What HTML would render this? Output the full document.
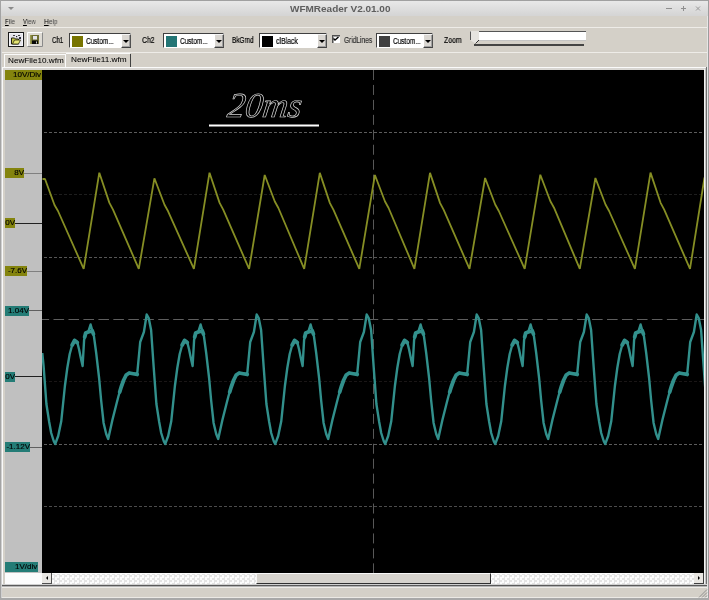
<!DOCTYPE html>
<html><head><meta charset="utf-8">
<style>
*{margin:0;padding:0;box-sizing:border-box}
html,body{width:709px;height:600px;overflow:hidden;background:#d4d0c8;font-family:"Liberation Sans",sans-serif;color:#000}
.a{position:absolute}
.t{position:absolute;white-space:nowrap;font-size:7px;line-height:8px;transform-origin:0 0;will-change:transform}
.combo{position:absolute;top:33px;height:15px;background:#fff;border-top:1px solid #808080;border-left:1px solid #808080;border-right:1px solid #fff;border-bottom:1px solid #fff;box-shadow:inset 1px 1px 0 #404040, inset -1px -1px 0 #d4d0c8;overflow:hidden}
.sw{position:absolute;top:2px;left:2px;width:12px;height:11px}
.dd{position:absolute;top:1px;right:1px;width:10px;height:13px;background:#d4d0c8;border-top:1px solid #fff;border-left:1px solid #fff;border-right:1px solid #404040;border-bottom:1px solid #404040}
.dd:after{content:"";position:absolute;left:2px;top:5px;border-left:3px solid transparent;border-right:3px solid transparent;border-top:3px solid #000}
.lab{position:absolute;left:5px;height:10px;font-size:8px;line-height:10px;text-align:right;color:#000;overflow:hidden;white-space:nowrap;will-change:transform;-webkit-text-stroke:0.15px #000}
.o{background:#84840e}
.c{background:#247c76}
.tt{position:absolute;white-space:nowrap;font-size:8.5px;line-height:8px;transform-origin:0 0;color:#000;will-change:transform;-webkit-text-stroke:0.2px currentColor}
.cb{position:absolute;top:33px;height:15px;background:#fff;border-top:1px solid #404040;border-left:1px solid #404040;border-right:1px solid #fff;border-bottom:1px solid #fff}
.btn{position:absolute;top:34px;width:10px;height:14px;background:#dad7d2;border-top:1px solid #f4f4f4;border-left:1px solid #fff;border-right:1px solid #505050;border-bottom:1px solid #404040;box-shadow:inset -1px -1px 0 #a0a0a0}
.arr{position:absolute;top:39.5px;width:0;height:0;border-left:3px solid transparent;border-right:3px solid transparent;border-top:3px solid #000}
.chk{position:absolute;left:332px;top:35px;width:8px;height:8px;background:#fff;border-top:1px solid #505050;border-left:1px solid #505050;box-shadow:inset 1px 1px 0 #a0a0a0}
</style></head><body>
<!-- window frame -->
<div class="a" style="left:0;top:0;width:709px;height:1px;background:#a0a0a0"></div>
<div class="a" style="left:0;top:0;width:1px;height:600px;background:#a4a4a4"></div>
<div class="a" style="left:1px;top:15px;width:1px;height:583px;background:#d0d0d0"></div>
<div class="a" style="left:708px;top:0;width:1px;height:600px;background:#9c9c9c"></div>
<div class="a" style="left:707px;top:15px;width:1px;height:583px;background:#e6e6e6"></div>
<div class="a" style="left:2px;top:597px;width:705px;height:1px;background:#ebe9e5"></div>
<div class="a" style="left:0;top:598px;width:709px;height:2px;background:#a8a8a8"></div>
<!-- title bar -->
<div class="a" style="left:1px;top:1px;width:707px;height:15px;background:linear-gradient(#e8e8e8,#d4d4d4)"></div>
<div class="t" style="left:290px;top:5px;font-size:8.5px;line-height:8px;font-weight:bold;color:#5e5e5e;transform:scaleX(1.175)">WFMReader V2.01.00</div>
<div class="a" style="left:8px;top:7px;width:0;height:0;border-left:3px solid transparent;border-right:3px solid transparent;border-top:3px solid #8a8a8a"></div>
<svg class="a" style="left:660px;top:2px" width="46" height="12" viewBox="0 0 46 12">
<path d="M6,6.5 H12" stroke="#8e8e8e" stroke-width="1"/>
<path d="M21,6.5 H26 M23.5,4 V9" stroke="#8e8e8e" stroke-width="1"/>
<path d="M36,4.5 L40,8.5 M40,4.5 L36,8.5" stroke="#9a9a9a" stroke-width="1"/>
</svg>
<!-- menu -->
<div class="t" style="left:5px;top:18px;font-size:7.5px;color:#444;transform:scaleX(.82)"><u style="color:#000">F</u>ile</div>
<div class="t" style="left:23px;top:18px;font-size:7.5px;color:#444;transform:scaleX(.78)"><u style="color:#000">V</u>iew</div>
<div class="t" style="left:43.5px;top:18px;font-size:7.5px;color:#444;transform:scaleX(.88)"><u style="color:#000">H</u>elp</div>
<div class="a" style="left:2px;top:27px;width:705px;height:1px;background:#eeece8"></div>
<!-- toolbar -->
<svg class="a" style="left:8px;top:32px" width="16" height="15" viewBox="0 0 16 15">
<rect x="0.5" y="0.5" width="15" height="14" fill="#e6e4ea" stroke="#1a1a1a"/>
<rect x="1.5" y="1.5" width="13" height="12" fill="none" stroke="#f4f4f8"/>
<path d="M3.5,6 h3 l1,1 h3 v5 h-7 z" fill="#c8c850" stroke="#202010" stroke-width="1"/>
<path d="M4.5,12 l2,-4 h6 l-2,4 z" fill="#e6e676" stroke="#303010" stroke-width="0.8"/>
<rect x="5" y="3" width="2" height="1" fill="#404040"/>
<rect x="10" y="3" width="2" height="1" fill="#404040"/>
<rect x="8" y="4" width="1.2" height="1.2" fill="#202020"/>
<rect x="11" y="5" width="2" height="2" fill="#303040"/>
</svg>
<svg class="a" style="left:27px;top:32px" width="16" height="15" viewBox="0 0 16 15">
<rect x="0" y="0" width="16" height="15" fill="#dedbd4"/>
<path d="M0.5,14.5 V0.5 H15.5" fill="none" stroke="#ffffff"/>
<path d="M0.5,14.5 H15.5 V0.5" fill="none" stroke="#8a8a8a"/>
<rect x="3" y="3" width="9" height="9" fill="#6e6e30"/>
<rect x="3" y="3" width="1.5" height="9" fill="#9a9a50"/>
<rect x="6" y="4" width="4" height="3.5" fill="#e4e4ea"/>
<rect x="5" y="8.5" width="6" height="3.5" fill="#080808"/>
<rect x="9" y="9.5" width="1" height="2" fill="#d0d0c0"/>
</svg>
<div class="tt" style="left:52px;top:36px;transform:scaleX(.72)">Ch1</div>
<div class="cb" style="left:69px;width:62px"></div>
<div class="a" style="left:72px;top:36px;width:11px;height:11px;background:#787400"></div>
<div class="tt" style="left:86px;top:37px;transform:scaleX(0.76)">Custom...</div>
<div class="btn" style="left:121px"></div>
<div class="arr" style="left:123px"></div>
<div class="tt" style="left:142px;top:36px;transform:scaleX(.81)">Ch2</div>
<div class="cb" style="left:163px;width:61px"></div>
<div class="a" style="left:166px;top:36px;width:11px;height:11px;background:#237575"></div>
<div class="tt" style="left:179.5px;top:37px;transform:scaleX(0.76)">Custom...</div>
<div class="btn" style="left:214px"></div>
<div class="arr" style="left:216px"></div>
<div class="tt" style="left:231.5px;top:36px;transform:scaleX(.75)">BkGrnd</div>
<div class="cb" style="left:259px;width:68px"></div>
<div class="a" style="left:262px;top:36px;width:11px;height:11px;background:#000"></div>
<div class="tt" style="left:275.5px;top:37px;transform:scaleX(0.81)">clBlack</div>
<div class="btn" style="left:317px"></div>
<div class="arr" style="left:319px"></div>
<div class="chk"></div>
<svg class="a" style="left:332px;top:35px" width="8" height="8" viewBox="0 0 8 8"><path d="M1.5,3.5 L3,5 L6.5,2" fill="none" stroke="#000" stroke-width="1.4"/></svg>
<div class="tt" style="left:343.5px;top:36px;color:#303030;transform:scaleX(.77)">GridLines</div>
<div class="cb" style="left:376px;width:57px"></div>
<div class="a" style="left:379px;top:36px;width:11px;height:11px;background:#404040"></div>
<div class="tt" style="left:392.5px;top:37px;transform:scaleX(0.76)">Custom...</div>
<div class="btn" style="left:423px"></div>
<div class="arr" style="left:425px"></div>
<div class="tt" style="left:444px;top:36px;transform:scaleX(.81)">Zoom</div>
<!-- slider -->
<div class="a" style="left:479px;top:31px;width:107px;height:10px;background:#fff;border-top:1px solid #555;border-bottom:1px solid #c4c4c4"></div>
<div class="a" style="left:474px;top:44px;width:110px;height:2px;background:#444"></div>
<svg class="a" style="left:468px;top:30px" width="12" height="16" viewBox="0 0 12 16"><path d="M2,1 H11 V10 L7.5,13.5 L2,10 Z" fill="#e6e4e0"/><path d="M2.5,1.5 V10" stroke="#555" stroke-width="1"/><path d="M7.5,13.5 L11,10" stroke="#333" stroke-width="1"/></svg>
<div class="a" style="left:2px;top:52px;width:705px;height:1px;background:#eeece8"></div>
<!-- tabs -->
<div class="a" style="left:4px;top:54px;width:62px;height:13px;background:#d4d0c8;border-top:1px solid #fafafa;border-left:1px solid #fafafa;border-right:1px solid #fafafa"></div>
<div class="a" style="left:66px;top:53px;width:64px;height:1px;background:#fafafa"></div>
<div class="a" style="left:130px;top:54px;width:1px;height:13px;background:#404040"></div>
<div class="tt" style="left:8px;top:57px;font-size:8px;transform:scaleX(1.02);-webkit-text-stroke:0.05px #000">NewFile10.wfm</div>
<div class="tt" style="left:71px;top:56px;font-size:8px;transform:scaleX(1.03);-webkit-text-stroke:0.05px #000">NewFile11.wfm</div>
<!-- left column -->
<div class="a" style="left:2px;top:67px;width:704px;height:1px;background:#fafafa"></div>
<div class="a" style="left:3px;top:68px;width:703px;height:2px;background:#d8d6d2"></div>
<div class="a" style="left:2px;top:67px;width:1px;height:519px;background:#fafafa"></div>
<div class="a" style="left:5px;top:70px;width:37px;height:503px;background:#c0c0c0"></div>
<div class="a" style="left:5px;top:573px;width:37px;height:12px;background:#fcfcfc"></div>
<div class="lab o" style="top:70px;width:37px;text-align:left;padding-left:8px">10V/Div</div>
<div class="a" style="left:24px;top:173px;width:18px;height:1px;background:#808080"></div>
<div class="lab o" style="top:168px;width:19px">8V</div>
<div class="a" style="left:15px;top:223px;width:27px;height:1px;background:#202020"></div>
<div class="lab o" style="top:218px;width:10px">0V</div>
<div class="a" style="left:27px;top:271px;width:15px;height:1px;background:#808080"></div>
<div class="lab o" style="top:266px;width:22px">-7.6V</div>
<div class="a" style="left:29px;top:310px;width:13px;height:1px;background:#606060"></div>
<div class="lab c" style="top:306px;width:24px">1.04V</div>
<div class="a" style="left:15px;top:376px;width:27px;height:1px;background:#202020"></div>
<div class="lab c" style="top:372px;width:10px">0V</div>
<div class="a" style="left:30px;top:447px;width:12px;height:1px;background:#606060"></div>
<div class="lab c" style="top:442px;width:25px">-1.12V</div>
<div class="lab c" style="top:562px;width:33px;text-align:left;padding-left:10px">1V/div</div>
<!-- plot -->
<svg class="a" style="left:42px;top:70px;will-change:transform" width="662" height="503" viewBox="0 0 662 503">
<rect width="662" height="503" fill="#000"/>
<g stroke-width="1" stroke-dasharray="3 2" stroke-dashoffset="3" fill="none">
<line x1="0" y1="62.5" x2="660" y2="62.5" stroke="#5c5c5c"/>
<line x1="0" y1="124.5" x2="660" y2="124.5" stroke="#1e1e1e"/>
<line x1="0" y1="187.5" x2="660" y2="187.5" stroke="#565656"/>
<line x1="0" y1="311.5" x2="660" y2="311.5" stroke="#1a1616"/>
<line x1="0" y1="374.5" x2="660" y2="374.5" stroke="#5c5c5c"/>
<line x1="0" y1="436.5" x2="660" y2="436.5" stroke="#4c4c4c"/>
</g>
<line x1="0" y1="249.5" x2="662" y2="249.5" stroke="#5e5e5e" stroke-width="1" stroke-dasharray="10.6 4.36" stroke-dashoffset="3.46"/>
<line x1="331.5" y1="0" x2="331.5" y2="503" stroke="#585858" stroke-width="1" stroke-dasharray="10 4.95"/>
<path d="M0.5,109.0 L3.0,109.0 L12.5,135.0 L16.0,141.0 L41.7,198.8 L57.3,102.7 L67.4,132.9 L71.0,139.7 L96.8,198.8 L112.4,108.3 L122.5,134.8 L126.1,141.3 L151.9,198.8 L167.5,102.7 L177.6,132.9 L181.2,139.7 L207.1,198.8 L222.7,105.0 L232.8,131.5 L236.4,138.0 L262.2,198.8 L277.8,102.9 L287.9,133.1 L291.5,139.9 L317.3,198.8 L332.9,105.0 L343.0,131.5 L346.6,138.0 L372.4,198.8 L388.0,102.9 L398.1,133.1 L401.7,139.9 L427.5,198.8 L443.1,108.0 L453.2,134.5 L456.8,141.0 L482.7,198.8 L498.3,104.7 L508.4,131.2 L512.0,137.7 L537.8,198.8 L553.4,108.0 L563.5,134.5 L567.1,141.0 L592.9,198.8 L608.5,102.6 L618.6,132.8 L622.2,139.6 L648.0,198.8 L662.5,107.5" fill="none" stroke="#868e24" stroke-width="1.8" stroke-linejoin="bevel"/>
<path d="M0.3,283.0 L1.6,296.0 L4.4,334.0 L7.2,352.0 L9.2,363.0 L11.7,371.0 L13.2,374.0 L16.2,366.0 L19.3,351.0 L22.9,316.0 L25.3,298.0 L27.7,284.0 L30.2,275.0 L32.6,270.0 L35.2,272.0 L37.2,280.0 L38.6,287.0 L40.6,296.0 L42.1,270.0 L43.7,263.0 L46.2,262.0 L48.6,254.5 L50.4,261.0 L51.9,266.0 L54.2,283.0 L57.1,308.0 L59.1,330.0 L61.6,353.0 L64.2,364.0 L66.2,369.0 L70.4,350.0 L74.2,335.0 L76.5,326.0 L79.2,317.0 L81.7,310.0 L84.2,305.0 L87.2,303.0 L95.2,304.0 L96.7,288.0 L98.2,272.0 L101.9,262.0 L104.7,244.5 L106.7,248.0 L109.1,260.0 L111.6,296.0 L114.4,334.0 L117.2,352.0 L119.2,363.0 L121.7,371.0 L123.2,374.0 L126.2,366.0 L129.3,351.0 L132.9,316.0 L135.3,298.0 L137.7,284.0 L140.2,275.0 L142.6,270.0 L145.2,272.0 L147.2,280.0 L148.6,287.0 L150.6,296.0 L152.1,270.0 L153.7,263.0 L156.2,262.0 L158.6,254.5 L160.4,261.0 L161.9,266.0 L164.2,283.0 L167.1,308.0 L169.1,330.0 L171.6,353.0 L174.2,364.0 L176.2,369.0 L180.4,350.0 L184.2,335.0 L186.5,326.0 L189.2,317.0 L191.7,310.0 L194.2,305.0 L197.2,303.0 L205.2,304.0 L206.7,288.0 L208.2,272.0 L211.9,262.0 L214.7,244.5 L216.7,248.0 L219.1,260.0 L221.6,296.0 L224.4,334.0 L227.2,352.0 L229.2,363.0 L231.7,371.0 L233.2,374.0 L236.2,366.0 L239.3,351.0 L242.9,316.0 L245.3,298.0 L247.7,284.0 L250.2,275.0 L252.6,270.0 L255.2,272.0 L257.2,280.0 L258.6,287.0 L260.6,296.0 L262.1,270.0 L263.7,263.0 L266.2,262.0 L268.6,254.5 L270.4,261.0 L271.9,266.0 L274.2,283.0 L277.1,308.0 L279.1,330.0 L281.6,353.0 L284.2,364.0 L286.2,369.0 L290.4,350.0 L294.2,335.0 L296.5,326.0 L299.2,317.0 L301.7,310.0 L304.2,305.0 L307.2,303.0 L315.2,304.0 L316.7,288.0 L318.2,272.0 L321.9,262.0 L324.7,244.5 L326.7,248.0 L329.1,260.0 L331.6,296.0 L334.4,334.0 L337.2,352.0 L339.2,363.0 L341.7,371.0 L343.2,374.0 L346.2,366.0 L349.3,351.0 L352.9,316.0 L355.3,298.0 L357.7,284.0 L360.2,275.0 L362.6,270.0 L365.2,272.0 L367.2,280.0 L368.6,287.0 L370.6,296.0 L372.1,270.0 L373.7,263.0 L376.2,262.0 L378.6,254.5 L380.4,261.0 L381.9,266.0 L384.2,283.0 L387.1,308.0 L389.1,330.0 L391.6,353.0 L394.2,364.0 L396.2,369.0 L400.4,350.0 L404.2,335.0 L406.5,326.0 L409.2,317.0 L411.7,310.0 L414.2,305.0 L417.2,303.0 L425.2,304.0 L426.7,288.0 L428.2,272.0 L431.9,262.0 L434.7,244.5 L436.7,248.0 L439.1,260.0 L441.6,296.0 L444.4,334.0 L447.2,352.0 L449.2,363.0 L451.7,371.0 L453.2,374.0 L456.2,366.0 L459.3,351.0 L462.9,316.0 L465.3,298.0 L467.7,284.0 L470.2,275.0 L472.6,270.0 L475.2,272.0 L477.2,280.0 L478.6,287.0 L480.6,296.0 L482.1,270.0 L483.7,263.0 L486.2,262.0 L488.6,254.5 L490.4,261.0 L491.9,266.0 L494.2,283.0 L497.1,308.0 L499.1,330.0 L501.6,353.0 L504.2,364.0 L506.2,369.0 L510.4,350.0 L514.2,335.0 L516.5,326.0 L519.2,317.0 L521.7,310.0 L524.2,305.0 L527.2,303.0 L535.2,304.0 L536.7,288.0 L538.2,272.0 L541.9,262.0 L544.7,244.5 L546.7,248.0 L549.1,260.0 L551.6,296.0 L554.4,334.0 L557.2,352.0 L559.2,363.0 L561.7,371.0 L563.2,374.0 L566.2,366.0 L569.3,351.0 L572.9,316.0 L575.3,298.0 L577.7,284.0 L580.2,275.0 L582.6,270.0 L585.2,272.0 L587.2,280.0 L588.6,287.0 L590.6,296.0 L592.1,270.0 L593.7,263.0 L596.2,262.0 L598.6,254.5 L600.4,261.0 L601.9,266.0 L604.2,283.0 L607.1,308.0 L609.1,330.0 L611.6,353.0 L614.2,364.0 L616.2,369.0 L620.4,350.0 L624.2,335.0 L626.5,326.0 L629.2,317.0 L631.7,310.0 L634.2,305.0 L637.2,303.0 L645.2,304.0 L646.7,288.0 L648.2,272.0 L651.9,262.0 L654.7,244.5 L656.7,248.0 L659.1,260.0 L661.6,296.0 L664.4,334.0 L667.2,352.0 L669.2,363.0" fill="none" stroke="#32908c" stroke-width="2.4" stroke-linejoin="round"/>
<path d="M77.7,322.0 L79.2,317.0 L81.7,310.0 L84.2,305.0 L87.2,303.0 L95.2,304.5 M30.2,275.0 L32.6,270.5 L35.2,272.5 M42.7,267.0 L43.7,263.0 L46.2,262.0 L50.4,261.0 L51.4,264.0 M187.7,322.0 L189.2,317.0 L191.7,310.0 L194.2,305.0 L197.2,303.0 L205.2,304.5 M140.2,275.0 L142.6,270.5 L145.2,272.5 M152.7,267.0 L153.7,263.0 L156.2,262.0 L160.4,261.0 L161.4,264.0 M297.7,322.0 L299.2,317.0 L301.7,310.0 L304.2,305.0 L307.2,303.0 L315.2,304.5 M250.2,275.0 L252.6,270.5 L255.2,272.5 M262.7,267.0 L263.7,263.0 L266.2,262.0 L270.4,261.0 L271.4,264.0 M407.7,322.0 L409.2,317.0 L411.7,310.0 L414.2,305.0 L417.2,303.0 L425.2,304.5 M360.2,275.0 L362.6,270.5 L365.2,272.5 M372.7,267.0 L373.7,263.0 L376.2,262.0 L380.4,261.0 L381.4,264.0 M517.7,322.0 L519.2,317.0 L521.7,310.0 L524.2,305.0 L527.2,303.0 L535.2,304.5 M470.2,275.0 L472.6,270.5 L475.2,272.5 M482.7,267.0 L483.7,263.0 L486.2,262.0 L490.4,261.0 L491.4,264.0 M627.7,322.0 L629.2,317.0 L631.7,310.0 L634.2,305.0 L637.2,303.0 L645.2,304.5 M580.2,275.0 L582.6,270.5 L585.2,272.5 M592.7,267.0 L593.7,263.0 L596.2,262.0 L600.4,261.0 L601.4,264.0" fill="none" stroke="#32908c" stroke-width="3.8" stroke-linejoin="round" stroke-linecap="round"/>
<text x="185" y="47" font-family="Liberation Serif" font-style="italic" font-size="35" fill="#000" stroke="#d8d8d8" stroke-width="0.7" transform="skewX(-8) translate(6,0)">20ms</text>
<line x1="167" y1="55.5" x2="277" y2="55.5" stroke="#fff" stroke-width="2"/>
</svg>
<!-- right border -->
<div class="a" style="left:704px;top:69px;width:1px;height:516px;background:#f2f2f2"></div>
<div class="a" style="left:705px;top:68px;width:1px;height:518px;background:#c4c4c4"></div>
<div class="a" style="left:706px;top:67px;width:1px;height:520px;background:#707070"></div>
<!-- scrollbar -->
<div class="a" style="left:42px;top:573px;width:662px;height:12px;background:repeating-conic-gradient(#e4e4e4 0 25%,#fcfcfc 0 50%) 0 1px/5px 5px;border-top:1px solid #fcfcfc"></div>
<div class="a" style="left:42px;top:573px;width:10px;height:11px;background:#e8e6e2;border-right:1px solid #505050;border-bottom:1px solid #505050"></div>
<div class="a" style="left:46px;top:576px;width:0;height:0;border-top:2.5px solid transparent;border-bottom:2.5px solid transparent;border-right:2.5px solid #000"></div>
<div class="a" style="left:694px;top:573px;width:10px;height:11px;background:#e8e6e2;border-right:1px solid #404040;border-bottom:1px solid #404040"></div>
<div class="a" style="left:698px;top:576px;width:0;height:0;border-top:2.5px solid transparent;border-bottom:2.5px solid transparent;border-left:2.5px solid #000"></div>
<div class="a" style="left:256px;top:573px;width:235px;height:11px;background:#d6d3cd;border-top:1px solid #f8f8f8;border-left:1px solid #f8f8f8;border-right:1px solid #303030;border-bottom:1px solid #303030"></div>
<!-- bottom -->
<div class="a" style="left:2px;top:584px;width:705px;height:1px;background:#d0d0d0"></div>
<div class="a" style="left:2px;top:585px;width:705px;height:1px;background:#5a5a5a"></div>
<div class="a" style="left:2px;top:586px;width:705px;height:1px;background:#b4b4b4"></div>
<div class="a" style="left:2px;top:587px;width:705px;height:1px;background:#eeece8"></div>
<svg class="a" style="left:698px;top:589px" width="10" height="9" viewBox="0 0 10 9"><path d="M1,8.5 L9,0.5 M4,8.5 L9,3.5 M7,8.5 L9,6.5" stroke="#909090" stroke-width="1"/></svg>
</body></html>
